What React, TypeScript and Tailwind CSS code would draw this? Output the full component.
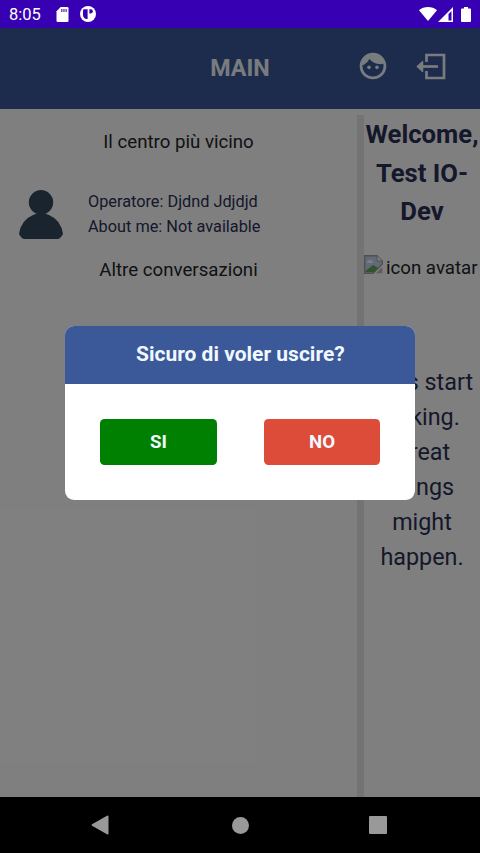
const StatusBar = () => (
  <div className="flex h-7 shrink-0 items-center bg-[#3700b3] pt-px text-white">
    <span className="ml-[9px] w-[47px] pt-0.5 text-[16.5px] leading-none">8:05</span>
    <svg className="h-[15px] w-[13px]" viewBox="0 0 12 15" fill="currentColor">
      <path d="M4.2 0H10.8Q12 0 12 1.2V13.8Q12 15 10.8 15H1.2Q0 15 0 13.8V4.2Z" />
      <path d="M4.6 2h1.3v3H4.6zM6.8 2h1.3v3H6.8zM9 2h1.3v3H9z" fill="#3700b3" fillOpacity=".8" />
    </svg>
    <svg className="-mt-px ml-[11px] h-4 w-4" viewBox="0 0 16 16">
      <circle cx="8" cy="8" r="8" fill="white" />
      <path d="M4.2 3.2H7.6V13H6.4Q3 12.4 3 8.6V4.4Q3 3.2 4.2 3.2Z" fill="#3700b3" />
      <path d="M9.4 3.2H11Q12.8 3.4 12.8 5.3Q12.8 7.4 10.8 7.5H9.4Z" fill="#3700b3" />
    </svg>
    <svg className="-mt-px ml-auto h-[14px] w-[18px]" viewBox="0 0 18 14" fill="currentColor">
      <path d="M0 3.2C5-1 13-1 18 3.2L9 14Z" />
    </svg>
    <svg className="-mt-px ml-px h-[15px] w-[15px]" viewBox="0 0 15 15" fill="currentColor">
      <path fillRule="evenodd" d="M15 0V15H0ZM13.5 4 10.5 7V13.5H13.5Z" />
    </svg>
    <svg className="-mt-px ml-2 mr-[9px] h-[15px] w-[10px]" viewBox="0 0 10 15" fill="currentColor">
      <path d="M3 0H7V1.5H9Q10 1.5 10 2.5V14Q10 15 9 15H1Q0 15 0 14V2.5Q0 1.5 1 1.5H3Z" />
    </svg>
  </div>
);

const Header = () => (
  <header className="grid h-[81.4px] shrink-0 grid-cols-3 items-center bg-[#3b5998] text-[aliceblue]">
    <h1 className="col-start-2 text-center text-[23.3px] font-bold">MAIN</h1>
    <div className="flex items-center justify-end pb-[5px] pr-[34px]">
      <svg className="mr-[26px] h-8 w-8" viewBox="0 0 24 24" fill="currentColor">
        <circle cx="9" cy="13" r="1.35" />
        <circle cx="15" cy="13" r="1.35" />
        <path
          fillRule="evenodd"
          d="M12 2C6.48 2 2 6.48 2 12s4.48 10 10 10 10-4.48 10-10S17.52 2 12 2zm0 17.9c-4.36 0-7.9-3.54-7.9-7.9 0-.2.01-.3.03-.5 2.3-.95 4.13-2.5 5.13-4.7C11.07 9.1 14.05 10.6 17.42 10.6c.78 0 1.53-.09 2.25-.26.16.5.23 1.1.23 1.66 0 4.36-3.54 7.9-7.9 7.9z"
        />
      </svg>
      <svg className="h-[27px] w-[31px]" viewBox="0 0 31 27" fill="none" stroke="currentColor" strokeWidth="2.7">
        <path d="M11.5 9V2H29V25H11.5V18" />
        <path d="M6 13.5H23" />
        <path d="M7.5 8.8 2.3 13.5 7.5 18.2Z" fill="currentColor" strokeWidth="1.5" strokeLinejoin="round" />
      </svg>
    </div>
  </header>
);

const Conversations = () => (
  <section className="w-[357px] shrink-0 pt-[19.5px] text-[#212529]">
    <h2 className="text-center text-[18.67px] leading-[26px]">Il centro più vicino</h2>
    <div className="mt-[35px] flex h-[50px] items-center">
      <svg className="ml-[19px] mr-[25px] h-[50px] w-11" viewBox="0 0 44 50" fill="#34495e">
        <circle cx="22" cy="12.3" r="12.2" />
        <path d="M14 25Q22 21 30 25Q42 30 44 44Q41.5 48.7 39 49H5Q2.5 48.7 0 44Q2 30 14 25Z" />
      </svg>
      <div className="text-[16.3px] leading-[24.5px] text-[#2b3056]">
        <p>Operatore: Djdnd Jdjdjd</p>
        <p>About me: Not available</p>
      </div>
    </div>
    <h2 className="mt-[17px] text-center text-[18.67px] leading-[26px]">Altre conversazioni</h2>
  </section>
);

const BrokenImage = () => (
  <svg className="mb-[7px] h-[19px] w-[19px]" viewBox="0 0 19 19">
    <path d="M.7.7H13L18.3 6V9L9 18.3H.7Z" fill="#c5d5f4" stroke="#a0a0a0" strokeWidth="1.4" />
    <path d="M13 .7V6H18.3" fill="white" stroke="#a0a0a0" />
    <path d="M3 8Q3 5 6 5Q9 5 9 8Z" fill="white" />
    <path d="M1.5 17V16L9 10L14 13L10 17Z" fill="#62a85a" />
    <path d="M12 18.3 18.3 12V18.3Z" fill="#b8b8b8" />
  </svg>
);

const Welcome = () => (
  <aside className="mt-1.5 flex-1 border-l-[7px] border-[#e7e7e7] text-center text-[#2b3056]">
    <h2 className="text-[25.67px] font-bold leading-[38.4px]">
      Welcome,
      <br />
      Test IO-
      <br />
      Dev
    </h2>
    <div className="mt-[22.5px] flex h-[30px] items-center whitespace-nowrap text-[18.67px] text-[#212529]">
      <BrokenImage />
      <span className="ml-[3px]">icon avatar</span>
    </div>
    <p className="mt-[82px] text-[23.33px] leading-[35px]">
      Let's start
      <br />
      talking.
      <br />
      Great
      <br />
      things
      <br />
      might
      <br />
      happen.
    </p>
  </aside>
);

const ExitDialog = () => (
  <div className="absolute inset-0 flex justify-center bg-black/50 pt-[297.5px]">
    <div className="ml-[0.7px] h-[174.9px] w-[350px] overflow-hidden rounded-[9px] bg-white text-[aliceblue]">
      <h2 className="flex h-[58.5px] items-center justify-center bg-[#3b5998] pb-px text-[21px] font-bold">
        Sicuro di voler uscire?
      </h2>
      <div className="flex justify-between px-[35px] pt-[35px] text-[18.67px] font-bold">
        <button className="h-[46.4px] w-[116.5px] rounded-[4.5px] bg-[#008000]">SI</button>
        <button className="h-[46.4px] w-[116.5px] rounded-[4.5px] bg-[#dd4b39]">NO</button>
      </div>
    </div>
  </div>
);

const NavigationBar = () => (
  <nav className="flex h-14 shrink-0 items-center justify-between bg-black pl-[91px] pr-[93px] text-[#999]">
    <svg className="h-5 w-[18px]" viewBox="0 0 18 20" fill="currentColor">
      <path d="M1 9.2 16 .8Q17.5 0 17.5 1.6V18.4Q17.5 20 16 19.2L1 10.8Q0 10 1 9.2Z" />
    </svg>
    <span className="ml-0.5 h-[17px] w-[17px] rounded-full bg-[#999]" />
    <span className="h-[18px] w-[18px] rounded-[1px] bg-[#999]" />
  </nav>
);

export default function App() {
  return (
    <div className="flex h-[853px] w-[480px] flex-col overflow-hidden bg-white font-[Roboto,sans-serif]">
      <StatusBar />
      <main className="relative flex min-h-0 flex-1 flex-col">
        <Header />
        <div className="flex min-h-0 flex-1">
          <Conversations />
          <Welcome />
        </div>
        <ExitDialog />
      </main>
      <NavigationBar />
    </div>
  );
}
